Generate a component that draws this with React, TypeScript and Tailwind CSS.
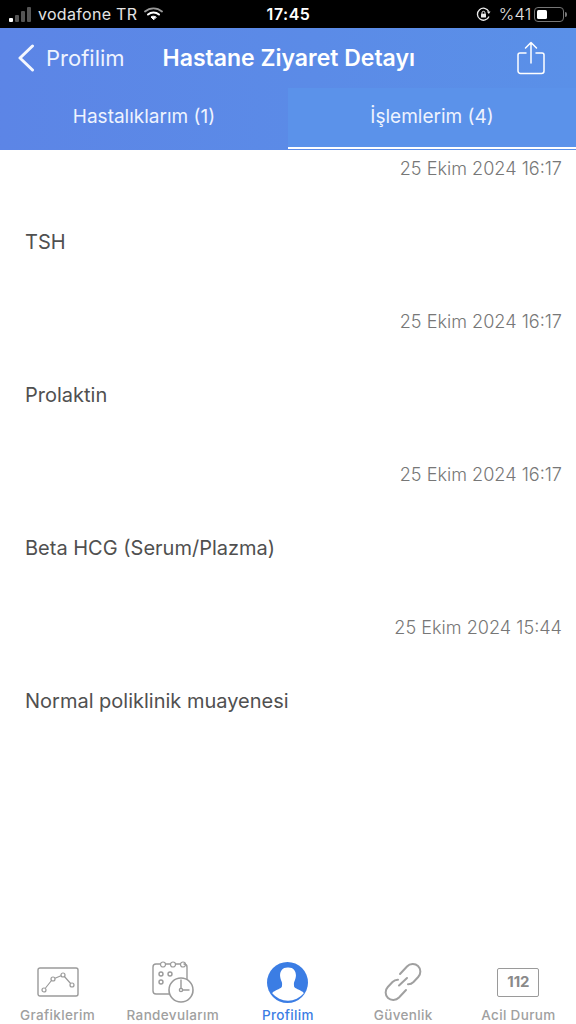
const visits = [
  { date: "25 Ekim 2024 16:17", name: "TSH" },
  { date: "25 Ekim 2024 16:17", name: "Prolaktin" },
  { date: "25 Ekim 2024 16:17", name: "Beta HCG (Serum/Plazma)" },
  { date: "25 Ekim 2024 15:44", name: "Normal poliklinik muayenesi" },
];

function StatusBar() {
  return (
    <div className="flex h-7 items-center justify-between bg-black pl-[9px] pr-[9px] text-[#e4e4e4]">
      <div className="flex w-[190px] items-center">
        <div className="flex h-[15px] items-end gap-[2px]">
          <span className="h-[4px] w-[4px] rounded-[1px] bg-white" />
          <span className="h-[7px] w-[4px] rounded-[1px] bg-[#555]" />
          <span className="h-[11px] w-[4px] rounded-[1px] bg-[#555]" />
          <span className="h-[15px] w-[4px] rounded-[1px] bg-[#555]" />
        </div>
        <span className="ml-[7px] text-[16px] tracking-[0.3px]">vodafone TR</span>
        <svg className="ml-[7px]" width="19" height="14" viewBox="0 0 19 14" fill="none" stroke="white" strokeLinecap="round">
          <path d="M1 4.5C6 .2 13 .2 18 4.5" strokeWidth="1.8" stroke="#999" />
          <path d="M4 7.5c3.2-2.7 7.8-2.7 11 0" strokeWidth="2" />
          <path d="M9.5 12.5 7 10c1.4-1.1 3.6-1.1 5 0z" fill="white" strokeWidth="1" />
        </svg>
      </div>
      <span className="ml-[1px] text-[16px] font-semibold tracking-[0.5px] text-white">17:45</span>
      <div className="flex w-[190px] items-center justify-end">
        <svg width="15" height="15" viewBox="0 0 15 15" fill="none" stroke="#eee" strokeWidth="1.3">
          <path d="M13 9.5A6 6 0 1 1 12.8 4.5" />
          <path d="M14.5 4.5h-3.6l1.9 2.6z" fill="#eee" stroke="none" />
          <rect x="5" y="6.8" width="5" height="3.8" rx=".6" fill="#eee" stroke="none" />
          <path d="M6 7V5.8a1.5 1.5 0 0 1 3 0V7" strokeWidth="1" />
        </svg>
        <span className="ml-[8px] text-[16.5px] font-light tracking-[0.2px]">%41</span>
        <div className="ml-[3px] flex h-[15px] w-[30px] items-center rounded-[4px] border border-[#777] p-[2px]">
          <span className="h-full w-[10px] rounded-[1.5px] bg-white" />
        </div>
        <span className="ml-[1px] h-[5px] w-[1.5px] rounded-r bg-[#777]" />
      </div>
    </div>
  );
}

function Header() {
  return (
    <div className="h-[122px] bg-gradient-to-r from-[#5c85e6] to-[#5a90e8] text-white">
      <div className="flex h-[60px] items-center">
        <svg className="ml-[17px] shrink-0" width="18" height="28" viewBox="0 0 18 28" fill="none" stroke="#f4f7fe" strokeWidth="3" strokeLinecap="round" strokeLinejoin="round">
          <path d="M15.5 2 3 14l12.5 12" />
        </svg>
        <span className="ml-[11px] text-[22px] text-[#eef3fe]">Profilim</span>
        <span className="ml-[38px] text-[23px] font-semibold">Hastane Ziyaret Detayı</span>
        <svg className="ml-auto mr-[31px]" width="28" height="34" viewBox="0 0 28 34" fill="none" stroke="white" strokeWidth="1.5" strokeLinecap="round" strokeLinejoin="round">
          <path d="M9 12H3a2 2 0 0 0-2 2v16a2.5 2.5 0 0 0 2.5 2.5h21A2.5 2.5 0 0 0 27 30V14a2 2 0 0 0-2-2h-6" />
          <path d="M14 22V1.5M8.5 7 14 1.5 19.5 7" />
        </svg>
      </div>
      <div className="grid h-[62px] grid-cols-2">
        <div className="flex h-[59px] items-center justify-center pb-[1px] text-[19px] text-[#eef3fe]">Hastalıklarım (1)</div>
        <div className="flex h-[61px] items-center justify-center border-b-[2px] border-white bg-[#5b92ea] text-[19px] text-[#eef3fe]">
          İşlemlerim (4)
        </div>
      </div>
    </div>
  );
}

function VisitRow({ date, name }: { date: string; name: string }) {
  return (
    <div className="h-[153px]">
      <div className="flex h-[38px] items-center justify-end pr-[14px] text-[18.1px] font-light text-[#777]">{date}</div>
      <div className="flex h-[108px] items-center pl-[25px] text-[20px] text-[#505050]">{name}</div>
    </div>
  );
}

function TabItem({ label, active, icon }: { label: string; active?: boolean; icon: React.ReactNode }) {
  return (
    <div className="flex flex-col items-center">
      <div className="flex h-[44px] items-center justify-center">{icon}</div>
      <span className={`mt-[1px] text-[13.5px] font-medium tracking-[0.35px] ${active ? "text-[#3b7de4]" : "text-[#a0a0a0]"}`}>{label}</span>
    </div>
  );
}

function TabBar() {
  return (
    <div className="grid h-[64px] grid-cols-5 bg-white">
      <TabItem
        label="Grafiklerim"
        icon={
          <svg width="42" height="30" viewBox="0 0 42 30" fill="none" stroke="#9a9a9a" strokeWidth="1.2">
            <rect x="1" y="1" width="40" height="28" rx="2" strokeWidth="1.4" />
            <circle cx="7" cy="23" r="2" />
            <circle cx="16" cy="12" r="2" />
            <circle cx="26" cy="8" r="2" />
            <circle cx="35" cy="18" r="2" />
            <path d="m8.5 21 6-7.5M18 11.2 24 8.8M27.4 9.5l6.2 7" />
          </svg>
        }
      />
      <TabItem
        label="Randevularım"
        icon={
          <svg width="42" height="42" viewBox="0 0 42 42" fill="none" stroke="#9a9a9a" strokeWidth="1.4" strokeLinecap="round">
            <path d="M25 33H4a3 3 0 0 1-3-3V6a3 3 0 0 1 3-3h4M14 3h4M24 3h4M32 3a3 3 0 0 1 3 3v12" />
            <circle cx="11" cy="3.5" r="2.5" strokeWidth="1.2" />
            <circle cx="21" cy="3.5" r="2.5" strokeWidth="1.2" />
            <circle cx="31" cy="3.5" r="2.5" strokeWidth="1.2" />
            <circle cx="9" cy="13" r="2" />
            <circle cx="18" cy="13" r="2" />
            <circle cx="9" cy="21" r="2" />
            <circle cx="29" cy="29" r="12" strokeWidth="1.6" fill="white" />
            <circle cx="29" cy="29" r="1.6" />
            <path d="M29 27V19M31 29h6" />
          </svg>
        }
      />
      <TabItem
        label="Profilim"
        active
        icon={
          <svg width="41" height="41" viewBox="0 0 41 41">
            <circle cx="20.5" cy="20.5" r="20.5" fill="#3b7de4" />
            <path
              d="M20.5 5.5c-5.2 0-7.8 4-7.4 8.6.1 1.6.7 4 1.6 5.7.6 1.2.4 3.2.2 4.6-.5 1.9-6 3.5-8.5 5.3-.6.5-1 1-1.2 1.5a20.5 20.5 0 0 0 31.6 0c-.2-.5-.6-1-1.2-1.5-2.5-1.8-8-3.4-8.5-5.3-.2-1.4-.4-3.4.2-4.6.9-1.7 1.5-4.1 1.6-5.7.4-4.6-2.2-8.6-7.4-8.6z"
              fill="white"
            />
          </svg>
        }
      />
      <TabItem
        label="Güvenlik"
        icon={
          <svg width="42" height="42" viewBox="0 0 42 42" fill="none" stroke="#a0a0a0" strokeWidth="2" strokeLinecap="round">
            <path d="M18 13 25 5.5c3-3 8-3.2 11-.5 3.2 3 3 8 .2 11l-4.7 5c-1.8 1.8-3.6 2.4-5.5 2.3" />
            <path d="M24 29l-7 7.5c-3 3-8 3.2-11 .5-3.2-3-3-8-.2-11l4.7-5c1.8-1.8 3.6-2.4 5.5-2.3" />
            <path d="M17 24.5 25 17" />
          </svg>
        }
      />
      <TabItem
        label="Acil Durum"
        icon={
          <div className="flex h-[29px] w-[42px] items-center justify-center rounded-[2px] border-[1.5px] border-[#9a9a9a] text-[15px] font-bold text-[#8a8a8a]">112</div>
        }
      />
    </div>
  );
}

export default function App() {
  return (
    <div className="flex h-[1024px] w-[576px] flex-col overflow-hidden bg-white font-['Inter',sans-serif]">
      <StatusBar />
      <Header />
      <div className="flex-1">
        {visits.map((visit, i) => (
          <VisitRow key={i} date={visit.date} name={visit.name} />
        ))}
      </div>
      <TabBar />
    </div>
  );
}
